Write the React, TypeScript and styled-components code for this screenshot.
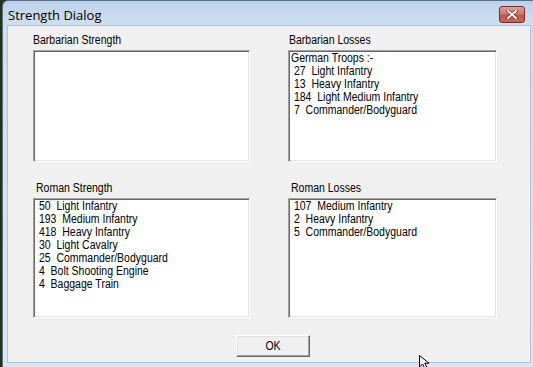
import React from "react";
import styled, { createGlobalStyle } from "styled-components";

const Global = createGlobalStyle`
  html, body { margin: 0; padding: 0; background: #2a3328; }
  body { width: 533px; height: 367px; overflow: hidden; }
`;

const Desktop = styled.div`
  position: relative;
  display: flex;
  width: 533px;
  height: 367px;
  background: #26301f;
  overflow: hidden;
`;

const Window = styled.div`
  flex: 1;
  margin-left: 2px;
  display: flex;
  flex-direction: column;
  border-top-left-radius: 6px;
  border: 1px solid #5a6f86;
  border-right: none;
  border-bottom: none;
  background: linear-gradient(to bottom, #bcd2ea 0px, #cfdff0 24px, #d9e6f4 100%);
`;

const TitleBar = styled.div`
  height: 24px;
  display: flex;
  align-items: center;
  justify-content: space-between;
  padding: 0 8px 0 5px;
`;

const Title = styled.span`
  font-family: "Open Sans", "Noto Sans", sans-serif;
  font-size: 13px;
  color: #000;
  margin-top: 3px;
`;

const CloseBtn = styled.div`
  width: 24px;
  height: 15px;
  margin-top: 2px;
  border: 1px solid #6e2e25;
  border-radius: 3px;
  background: linear-gradient(to bottom, #e0a295 0%, #cf7a6a 45%, #c0574a 55%, #c66656 100%);
  display: flex;
  align-items: center;
  justify-content: center;
`;

const ClientFrame = styled.div`
  flex: 1;
  padding: 0 0 4px 4px;
  display: flex;
`;

const Client = styled.div`
  flex: 1;
  background: #f0f0f0;
  border: 1px solid #aac4e0;
  margin-right: 2px;
  display: flex;
  flex-direction: column;
  padding: 8px 0 0 25px;
  font-family: "Liberation Sans", Arial, sans-serif;
  font-size: 12.5px;
  color: #000;
`;

const Grid = styled.div`
  display: grid;
  grid-template-columns: 217px 209px;
  column-gap: 38px;
  row-gap: 20px;
`;

const Panel = styled.div`
  display: flex;
  flex-direction: column;
`;

const Narrow = styled.span`
  display: inline-block;
  white-space: pre;
  transform: scaleX(0.84);
  transform-origin: 0 50%;
`;

const Label = styled.div<{ $indent: number }>`
  line-height: 13px;
  height: 13px;
  margin-bottom: 3px;
  padding-left: ${(p) => p.$indent}px;
`;

const ListBox = styled.div<{ $h: number }>`
  height: ${(p) => p.$h}px;
  box-sizing: border-box;
  background: #fff;
  border-style: solid;
  border-width: 1px;
  border-color: #a0a0a0 #ffffff #ffffff #a0a0a0;
  box-shadow: inset 1px 1px 0 #696969, inset -1px -1px 0 #e3e3e3;
  padding: 1px 2px;
  overflow: hidden;
`;

const Line = styled.div`
  line-height: 13px;
  height: 13px;
`;

const ButtonRow = styled.div`
  display: flex;
  padding-left: 203px;
  margin-top: 17px;
`;

const OkButton = styled.button`
  width: 74px;
  height: 22px;
  box-sizing: border-box;
  background: #f0f0f0;
  border-style: solid;
  border-width: 1px;
  border-color: #ffffff #696969 #696969 #ffffff;
  box-shadow: inset -1px -1px 0 #a0a0a0, inset 1px 1px 0 #e3e3e3;
  font-family: "Liberation Sans", Arial, sans-serif;
  font-size: 12.5px;
  color: #000;
  padding: 0;
  margin: 0;
  display: flex;
  align-items: center;
  justify-content: center;
`;

const ButtonText = styled.span`
  display: inline-block;
  transform: scaleX(0.84);
`;

const Cursor = styled.svg`
  position: absolute;
  left: 419px;
  top: 355px;
`;

const panels = [
  { label: "Barbarian Strength", indent: 0, h: 112, lines: [] as string[] },
  {
    label: "Barbarian Losses",
    indent: 1,
    h: 112,
    lines: [
      "German Troops :-",
      " 27  Light Infantry",
      " 13  Heavy Infantry",
      " 184  Light Medium Infantry",
      " 7  Commander/Bodyguard",
    ],
  },
  {
    label: "Roman Strength",
    indent: 3,
    h: 120,
    lines: [
      " 50  Light Infantry",
      " 193  Medium Infantry",
      " 418  Heavy Infantry",
      " 30  Light Cavalry",
      " 25  Commander/Bodyguard",
      " 4  Bolt Shooting Engine",
      " 4  Baggage Train",
    ],
  },
  {
    label: "Roman Losses",
    indent: 3,
    h: 120,
    lines: [" 107  Medium Infantry", " 2  Heavy Infantry", " 5  Commander/Bodyguard"],
  },
];

export default function App() {
  return (
    <>
      <Global />
      <Desktop>
        <Window>
          <TitleBar>
            <Title>Strength Dialog</Title>
            <CloseBtn>
              <svg width="12" height="9" viewBox="0 0 12 9">
                <path d="M2 1 L10 8 M10 1 L2 8" stroke="#5a2a22" strokeWidth="3.4" strokeLinecap="round" />
                <path d="M2 1 L10 8 M10 1 L2 8" stroke="#ffffff" strokeWidth="2" strokeLinecap="round" />
              </svg>
            </CloseBtn>
          </TitleBar>
          <ClientFrame>
            <Client>
              <Grid>
                {panels.map((p) => (
                  <Panel key={p.label}>
                    <Label $indent={p.indent}>
                      <Narrow>{p.label}</Narrow>
                    </Label>
                    <ListBox $h={p.h}>
                      {p.lines.map((l, i) => (
                        <Line key={i}>
                          <Narrow>{l}</Narrow>
                        </Line>
                      ))}
                    </ListBox>
                  </Panel>
                ))}
              </Grid>
              <ButtonRow>
                <OkButton>
                  <ButtonText>OK</ButtonText>
                </OkButton>
              </ButtonRow>
            </Client>
          </ClientFrame>
        </Window>
        <Cursor width="12" height="14" viewBox="0 0 12 14">
          <path d="M0.5 0.5 L0.5 12 L3.5 9 L6 13.5 L8 12.5 L5.8 8.2 L10 8.2 Z" fill="#f0f0f0" stroke="#000" strokeWidth="1" />
        </Cursor>
      </Desktop>
    </>
  );
}
